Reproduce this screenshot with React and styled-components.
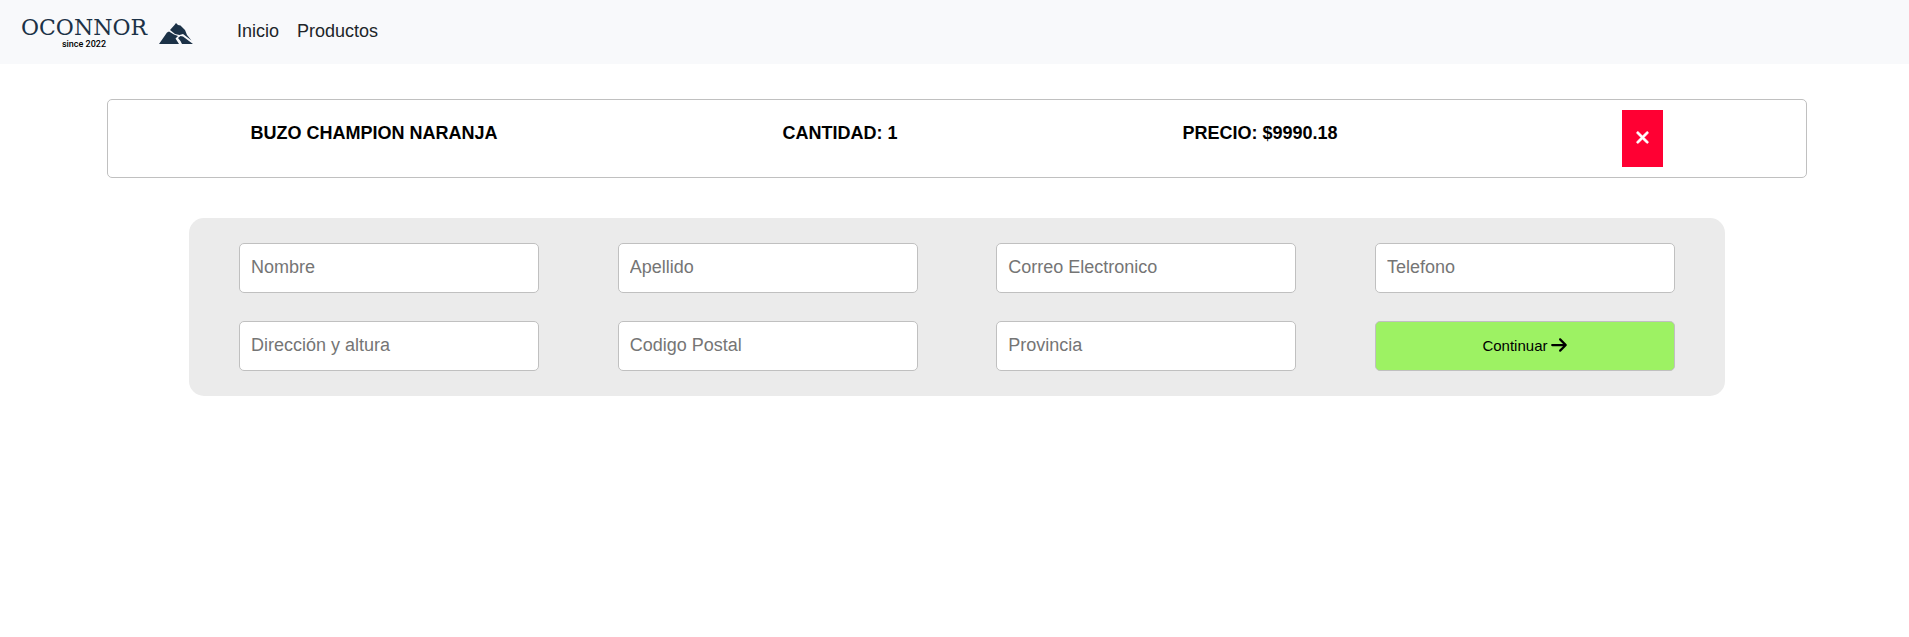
import React from 'react';
import styled, { createGlobalStyle } from 'styled-components';
import { FaArrowRight, FaXmark } from 'react-icons/fa6';

const GlobalStyle = createGlobalStyle`
  * { box-sizing: border-box; }
  body {
    margin: 0;
    background: #fff;
    color: #000;
    font-family: Arial, "Liberation Sans", sans-serif;
  }
`;

const Navbar = styled.header`
  display: flex;
  align-items: center;
  gap: 44px;
  height: 64px;
  padding: 0 21px;
  background: #f8f9fb;
`;

const Brand = styled.a`
  display: flex;
  align-items: center;
  gap: 12px;
  padding-top: 4px;
  color: #1c3247;
  text-decoration: none;
`;

const Wordmark = styled.span`
  display: flex;
  flex-direction: column;
  align-items: center;
`;

const BrandName = styled.span`
  font: 22px/20px "DejaVu Serif", serif;
`;

const BrandTag = styled.span`
  color: #000;
  font: 500 9px/12px Roboto, sans-serif;
`;

const Mountain = styled.svg`
  width: 34px;
  height: 22px;
  fill: currentColor;
`;

const NavLinks = styled.nav`
  display: flex;
  gap: 18px;
  padding-bottom: 2px;
`;

const NavLink = styled.a`
  color: #212529;
  font-size: 18px;
  line-height: 24px;
  text-decoration: none;
`;

const Page = styled.main`
  display: flex;
  flex-direction: column;
  gap: 40px;
  padding: 35px 102px 40px 107px;
`;

const CartItem = styled.section`
  display: flex;
  justify-content: space-around;
  align-items: flex-start;
  padding: 10px 0;
  border: 1px solid #c0c0c0;
  border-radius: 5px;
`;

const ItemText = styled.p`
  margin: 13px 0 0;
  font-size: 18px;
  font-weight: 700;
  line-height: 20px;
  text-transform: uppercase;
`;

const RemoveButton = styled.button`
  display: flex;
  justify-content: center;
  padding: 18px 11px 20px;
  border: 0;
  background: #ff0033;
  color: #fff;
  font-size: 19px;
  cursor: pointer;

  path {
    stroke: currentColor;
    stroke-width: 12;
  }
`;

const CheckoutForm = styled.form`
  display: grid;
  grid-template-columns: repeat(auto-fit, 300px);
  justify-content: space-between;
  gap: 28px;
  margin: 0 82px;
  padding: 25px 50px;
  border-radius: 15px;
  background: #ebebeb;
`;

const Field = styled.input`
  width: 100%;
  height: 50px;
  padding: 0 11px 2px;
  border: 1px solid #c0c0c0;
  border-radius: 5px;
  background: #fff;
  font-family: inherit;
  font-size: 18px;

  &::placeholder { color: #757575; }
`;

const SubmitButton = styled.button`
  display: flex;
  align-items: center;
  justify-content: center;
  gap: 4px;
  height: 50px;
  padding: 0 0 2px;
  border: 1px solid #c0c0c0;
  border-radius: 5px;
  background: #9df263;
  color: #000;
  font-family: inherit;
  font-size: 15px;
  cursor: pointer;

  svg { width: 16px; height: 18px; }
`;

const fields = [
  { name: 'nombre', label: 'Nombre', type: 'text' },
  { name: 'apellido', label: 'Apellido', type: 'text' },
  { name: 'correo', label: 'Correo Electronico', type: 'email' },
  { name: 'telefono', label: 'Telefono', type: 'tel' },
  { name: 'direccion', label: 'Dirección y altura', type: 'text' },
  { name: 'codigo', label: 'Codigo Postal', type: 'text' },
  { name: 'provincia', label: 'Provincia', type: 'text' },
];

export default function App() {
  return (
    <>
      <GlobalStyle />
      <Navbar>
        <Brand href="#">
          <Wordmark>
            <BrandName>OCONNOR</BrandName>
            <BrandTag>since 2022</BrandTag>
          </Wordmark>
          <Mountain viewBox="0 0 34 22" aria-hidden="true">
            <path d="M0 21 L8 9.500 L10 8.500 L15 11.500 L19 13 L16.5 15.5 L20 21 Z" />
            <path d="M11 7 L15.500 2 L17 0 L19 2 L21.500 2.500 L26 7 L28 12 L32.500 17.500 L24 11 L20.500 12 L16 11 Z" />
            <path d="M19 15 L21.500 13 L24 13.500 L34 21 L23 21 L21.500 18 Z" />
          </Mountain>
        </Brand>
        <NavLinks>
          <NavLink href="#">Inicio</NavLink>
          <NavLink href="#">Productos</NavLink>
        </NavLinks>
      </Navbar>
      <Page>
        <CartItem>
          <ItemText>Buzo Champion Naranja</ItemText>
          <ItemText>Cantidad: 1</ItemText>
          <ItemText>Precio: $9990.18</ItemText>
          <RemoveButton type="button" aria-label="Eliminar">
            <FaXmark />
          </RemoveButton>
        </CartItem>
        <CheckoutForm onSubmit={(event) => event.preventDefault()}>
          {fields.map(({ name, label, type }) => (
            <Field key={name} name={name} type={type} placeholder={label} aria-label={label} />
          ))}
          <SubmitButton type="submit">
            Continuar
            <FaArrowRight />
          </SubmitButton>
        </CheckoutForm>
      </Page>
    </>
  );
}
